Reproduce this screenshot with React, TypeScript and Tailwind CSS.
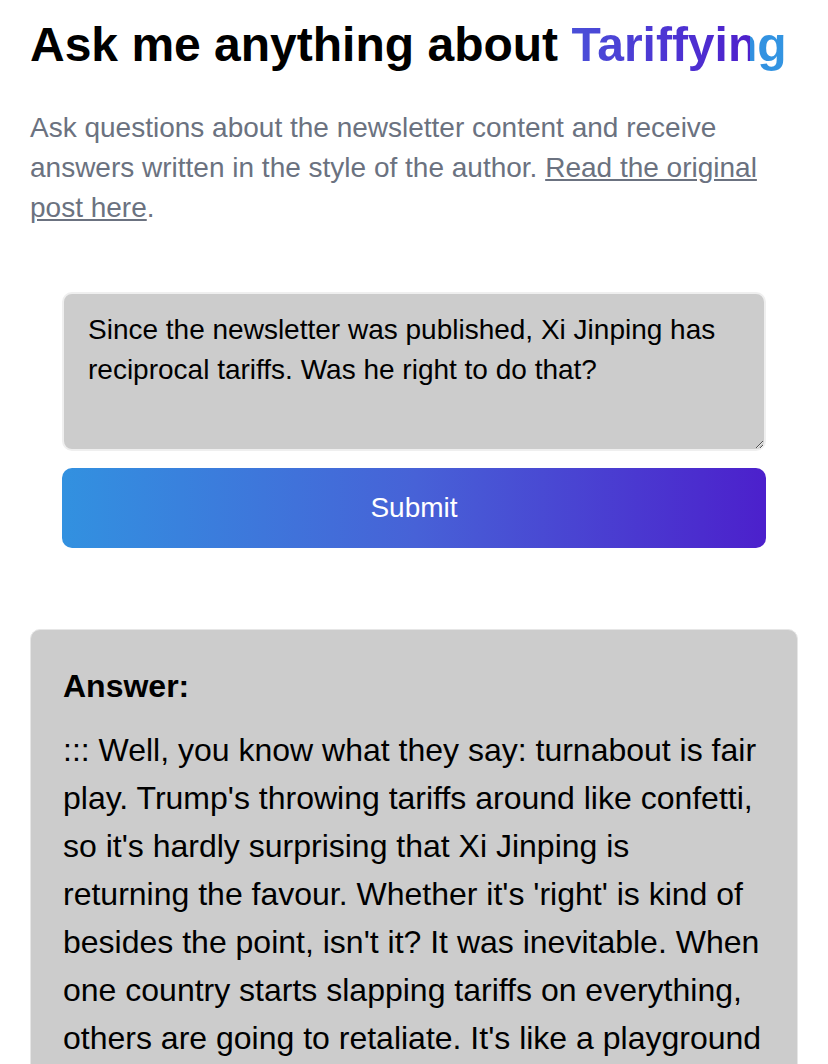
import React from "react";

export default function App() {
  return (
    <div className="min-h-screen bg-white px-[30px] pt-[16px] font-['Liberation_Sans',Arial,sans-serif]">
      <h1 className="text-[48px] leading-[58px] font-bold text-black">
        Ask me anything about{" "}
        <span className="bg-[linear-gradient(90deg,#4a4fd8_0%,#4d35d3_45%,#4e20cc_83%,#3190e0_83%,#3395e2_100%)] bg-clip-text text-transparent">
          Tariffying
        </span>
      </h1>
      <p className="mt-[34px] text-[28px] leading-[40px] text-[#6b7280]">
        Ask questions about the newsletter content and receive answers written in the style of the author.{" "}
        <a href="#" className="underline">
          Read the original post here
        </a>
        .
      </p>

      <div className="mt-[64px] px-[32px] flex flex-col gap-[17px]">
        <textarea
          className="block w-full h-[159px] rounded-[10px] border-2 border-[#efefef] bg-[#cccccc] px-[24px] pt-[16px] text-[28px] leading-[40px] text-black outline-none font-['Liberation_Sans',Arial,sans-serif]"
          defaultValue="Since the newsletter was published, Xi Jinping has reciprocal tariffs. Was he right to do that?"
        />
        <button className="h-[80px] w-full rounded-[10px] bg-[linear-gradient(90deg,#3291e0_0%,#4762d7_50%,#4c20cc_100%)] text-[28px] text-white">
          Submit
        </button>
      </div>

      <div className="mt-[81px] rounded-[10px] border border-[#e6e6e6] bg-[#cccccc] py-[32px] pl-[32px] pr-[34px] text-black">
        <h3 className="text-[32px] leading-[48px] font-bold">Answer:</h3>
        <p className="mt-[16px] text-[32px] leading-[48px]">
          ::: Well, you know what they say: turnabout is fair play. Trump's throwing tariffs around like confetti, so it's hardly surprising that Xi Jinping is returning the favour. Whether it's 'right' is kind of besides the point, isn't it? It was inevitable. When one country starts slapping tariffs on everything, others are going to retaliate. It's like a playground squabble, only with much higher stakes and far more economists watching.
        </p>
      </div>
    </div>
  );
}
